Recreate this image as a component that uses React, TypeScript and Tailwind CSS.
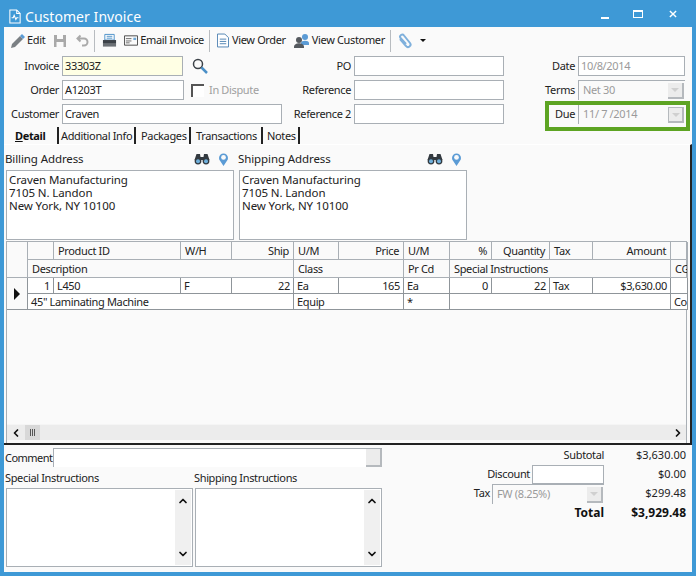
import type { ReactNode } from "react";
import { ChevronDown, ChevronLeft, ChevronRight, ChevronUp } from "lucide-react";

const gridCols = "grid grid-cols-[21px_26px_127px_51px_62px_45px_65px_46px_42px_58px_43px_78px_17px]";

function Label({ children, w }: { children: ReactNode; w: string }) {
  return <div className={`${w} shrink-0 text-right pr-[3px]`}>{children}</div>;
}

function Field({ value, w, bg, muted }: { value?: string; w: string; bg?: string; muted?: boolean }) {
  return (
    <div className={`${w} h-[20px] shrink-0 border border-[#a9afb5] ${bg ?? "bg-white"} ${muted ? "text-[#9a9a9a]" : ""} px-[2px] leading-[18px] overflow-hidden whitespace-nowrap`}>
      {value}
    </div>
  );
}

function Combo({ value, w, boxed }: { value: string; w: string; boxed?: boolean }) {
  return (
    <div className={`${w} h-[20px] shrink-0 flex border-l border-t border-[#a9afb5] bg-[#fafafa] text-[#9a9a9a] leading-[18px] pl-[4px]`}>
      <span className="flex-1 whitespace-nowrap">{value}</span>
      <span className={`w-[16px] h-[16px] mt-[2px] mr-[1px] flex items-center justify-center bg-[#ececec] border-r-2 border-b-2 border-[#b5b9bd] ${boxed ? "border-t border-l" : ""}`}>
        <span className="w-0 h-0 border-x-[4px] border-x-transparent border-t-[4px] border-t-[#d0d0d0]" />
      </span>
    </div>
  );
}

function Tab({ children, w, active }: { children: ReactNode; w: string; active?: boolean }) {
  return (
    <div className={`${w} h-[17px] leading-[17px] border-r-2 border-[#222] whitespace-nowrap ${active ? "font-bold pl-[11px] text-[#111]" : "pl-[2px]"}`}>
      {children}
    </div>
  );
}

function Divider() {
  return <div className="w-px h-[22px] bg-[#b8bcc0] mx-[5px]" />;
}

function Binoculars() {
  return (
    <svg width="16" height="12" viewBox="0 0 16 12">
      <path d="M2.500 1h3.500l.5 3h3l.5-3h3.500L15.500 7h-15z" fill="#333a40" />
      <circle cx="4" cy="8" r="3.400" fill="#333a40" />
      <circle cx="12" cy="8" r="3.400" fill="#333a40" />
      <circle cx="4" cy="8.200" r="2" fill="#6fb0dc" />
      <circle cx="12" cy="8.200" r="2" fill="#6fb0dc" />
    </svg>
  );
}

function Pin() {
  return (
    <svg width="11" height="15" viewBox="0 0 12 15">
      <path d="M6 14.500 2.400 9.200A4.900 4.900 0 1 1 9.600 9.200z" fill="#5b9bd5" />
      <circle cx="6" cy="5.300" r="2.600" fill="#fafafa" />
    </svg>
  );
}

function AddressColumn({ title }: { title: string }) {
  return (
    <div className="w-[228px] text-[11.5px] tracking-[-0.1px]">
      <div className="h-[19px] flex items-center gap-[8px] pb-[3px] pr-[5px]">
        <span className="flex-1 -ml-[1px]">{title}</span>
        <Binoculars />
        <Pin />
      </div>
      <div className="w-[228px] h-[70px] border border-[#a9afb5] bg-white px-[2px] pt-[2px] leading-[13px]">
        <div>Craven Manufacturing</div>
        <div>7105 N. Landon</div>
        <div>New York, NY 10100</div>
      </div>
    </div>
  );
}

function HeadCell({ children, span, right }: { children?: ReactNode; span?: string; right?: boolean }) {
  return (
    <div className={`${span ?? ""} h-[18px] border-r border-b border-[#a9afb5] px-[4px] leading-[17px] overflow-hidden whitespace-nowrap ${right ? "text-right" : ""}`}>
      {children}
    </div>
  );
}

function DataCell({ children, span, right }: { children?: ReactNode; span?: string; right?: boolean }) {
  return (
    <div className={`${span ?? ""} h-[16px] bg-white border-r border-b border-[#8f959a] px-[3px] leading-[16px] overflow-hidden whitespace-nowrap ${right ? "text-right" : ""}`}>
      {children}
    </div>
  );
}

function NotesBox() {
  return (
    <div className="w-[187px] h-[79px] border border-[#a9afb5] bg-white flex justify-end p-[1px]">
      <div className="w-[16px] bg-[#f0f0f0] flex flex-col justify-between items-center py-[5px]">
        <ChevronUp size={12} strokeWidth={3.5} color="#111" />
        <ChevronDown size={12} strokeWidth={3.5} color="#111" />
      </div>
    </div>
  );
}

function TotalRow({ label, value, bold, children }: { label?: string; value: string; bold?: boolean; children?: ReactNode }) {
  return (
    <div className={`flex items-center h-[19px] ${bold ? "font-bold text-[#111] text-[12px] tracking-[0px]" : ""}`}>
      <div className="w-[122px] flex justify-end items-center">
        {label}
        {children}
      </div>
      <div className="w-[82px] text-right tracking-[0px]">{value}</div>
    </div>
  );
}

export default function App() {
  return (
    <div className="w-[696px] h-[576px] bg-[#3e99d6] flex flex-col overflow-hidden text-[#222] text-[11px] font-['Noto_Sans',sans-serif] tracking-[-0.35px]">
      {/* title bar */}
      <div className="h-[27px] shrink-0 flex items-center pl-[9px] text-white">
        <div className="flex items-center pt-[5px]">
          <svg width="12" height="15" viewBox="0 0 14 17" fill="none" stroke="#fff" strokeWidth="1.2">
            <path d="M1 1h8l4 4v11H1z" />
            <path d="M9 1v4h4M3 10h2l1-3 2 5 1-2h2" />
          </svg>
          <span className="ml-[4px] text-[14px] tracking-[0.05px]">Customer Invoice</span>
        </div>
        <div className="ml-auto flex items-center mr-[19px]">
          <span className="w-[8px] h-[2px] bg-white mt-[8px]" />
          <span className="ml-[24px] w-[10px] h-[8px] border border-t-2 border-white" />
          <svg className="ml-[26px]" width="8" height="8" viewBox="0 0 9 9" stroke="#fff" strokeWidth="1.6">
            <path d="M1 1l7 7M8 1l-7 7" />
          </svg>
        </div>
      </div>

      <div className="mx-[4px] flex-1 mb-[4px] bg-[#fafafa] flex flex-col min-h-0">
        {/* toolbar */}
        <div className="h-[25px] mt-[1px] flex items-center pl-[6px] shrink-0">
          <svg width="16" height="16" viewBox="0 0 16 16">
            <path d="M1 15l1-4 8-8 3 3-8 8z" fill="#7b8084" />
            <path d="M10 3l2-2 3 3-2 2z" fill="#5b9bd5" />
          </svg>
          <span className="ml-[1px]">Edit</span>
          <svg className="ml-[8px]" width="14" height="14" viewBox="0 0 14 14">
            <path d="M1 1h12v12H1z" fill="#a9a9a9" />
            <path d="M4 1h6v4H4zM3.500 8h7v5h-7z" fill="#fafafa" />
          </svg>
          <svg className="ml-[9px]" width="13" height="13" viewBox="0 0 13 13" fill="none" stroke="#aaa" strokeWidth="2">
            <path d="M4.500 1.500 1.500 4.500l3 3M2 4.500h6a3.500 3.500 0 0 1 0 7H6" />
          </svg>
          <Divider />
          <svg className="ml-[2px]" width="15" height="15" viewBox="0 0 16 15">
            <path d="M3 1h10v6H3z" fill="#fff" stroke="#4a8fc7" />
            <path d="M1 7h14v4H1z" fill="#3c4248" />
            <path d="M1 11h14v3H1z" fill="#6b7075" />
            <path d="M5 3h6M5 5h6" stroke="#4a8fc7" />
          </svg>
          <svg className="ml-[7px]" width="14" height="11" viewBox="0 0 15 11" fill="none" stroke="#444">
            <path d="M.5.500h14v10H.5z" />
            <path d="M2 3.500h6M2 6h6M2 8h4" stroke="#666" />
            <path d="M10 2.500h3v2.500h-3z" fill="#6fa8d6" stroke="none" />
          </svg>
          <span className="ml-[2px]">Email Invoice</span>
          <Divider />
          <svg className="ml-[2px]" width="12" height="15" viewBox="0 0 13 15" fill="#fff" stroke="#4a7fb0">
            <path d="M.5.500h8l4 4v10H.5z" />
            <path d="M3 6h7M3 8.500h7M3 11h7" />
          </svg>
          <span className="ml-[3px]">View Order</span>
          <svg className="ml-[8px]" width="15" height="14" viewBox="0 0 15 14">
            <circle cx="11" cy="3" r="3" fill="#5b9bd5" />
            <path d="M7 9c0-3 8-3 8 0v2H7z" fill="#5b9bd5" />
            <circle cx="5" cy="6" r="3" fill="#555a5f" />
            <path d="M0 13c0-5 10-5 10 0v1H0z" fill="#555a5f" />
          </svg>
          <span className="ml-[3px]">View Customer</span>
          <Divider />
          <svg className="ml-[2px]" width="15" height="16" viewBox="0 0 15 16" fill="none" stroke="#7fb0dc" strokeWidth="2">
            <path d="M2 6l6 7a2.500 2.500 0 0 0 4-3L6 2.500A2 2 0 0 0 2.500 5l5.500 6" />
          </svg>
          <span className="ml-[7px] w-0 h-0 border-x-[3px] border-x-transparent border-t-[3px] border-t-[#111]" />
        </div>

        {/* header fields */}
        <div className="flex flex-col gap-[4px] mt-[3px] shrink-0 relative">
          <div className="flex items-center">
            <Label w="w-[58px]">Invoice</Label>
            <Field value="33303Z" w="w-[121px]" bg="bg-[#ffffe4]" />
            <svg className="ml-[9px]" width="16" height="16" viewBox="0 0 16 16" fill="none">
              <circle cx="6" cy="6" r="4.500" stroke="#3c4248" strokeWidth="1.5" />
              <path d="M9.500 9.500 15 15" stroke="#4a8fc7" strokeWidth="2.500" />
            </svg>
            <Label w="w-[146px]">PO</Label>
            <Field w="w-[150px]" />
            <Label w="w-[74px]">Date</Label>
            <Field value="10/8/2014" w="w-[107px]" muted />
          </div>
          <div className="flex items-center">
            <Label w="w-[58px]">Order</Label>
            <Field value="A1203T" w="w-[122px]" />
            <span className="ml-[7px] w-[13px] h-[13px] border-l-2 border-t-2 border-[#555] bg-white" />
            <span className="ml-[5px] text-[#a0a0a0] w-[75px]">In Dispute</span>
            <Label w="w-[70px]">Reference</Label>
            <Field w="w-[150px]" />
            <Label w="w-[74px]">Terms</Label>
            <Combo value="Net 30" w="w-[107px]" />
          </div>
          <div className="flex items-center">
            <Label w="w-[58px]">Customer</Label>
            <Field value="Craven" w="w-[220px]" />
            <Label w="w-[72px]">Reference 2</Label>
            <Field w="w-[150px]" />
            <Label w="w-[74px]">Due</Label>
            <Combo value="11/ 7 /2014" w="w-[107px]" boxed />
          </div>
          {/* highlight drawn over the screenshot */}
          <div className="absolute left-[541px] top-[45px] w-[145px] h-[30px] border-[4px] border-[#5da423]" />
        </div>

        {/* tabs */}
        <div className="flex mt-[3px] h-[17px] shrink-0">
          <Tab w="w-[55px]" active>
            <span className="underline decoration-1">D</span>etail
          </Tab>
          <Tab w="w-[77px]">Additional Info</Tab>
          <Tab w="w-[55px]">
            <span className="pl-[3px]">Packages</span>
          </Tab>
          <Tab w="w-[72px]">
            <span className="pl-[3px]">Transactions</span>
          </Tab>
          <Tab w="w-[37px]">
            <span className="pl-[2px]">Notes</span>
          </Tab>
        </div>

        {/* detail panel */}
        <div className="flex-1 min-h-0 flex flex-col border-t border-white border-r-2 border-r-[#222]">
          <div className="flex gap-[5px] pl-[2px] mt-[6px] shrink-0">
            <AddressColumn title="Billing Address" />
            <AddressColumn title="Shipping Address" />
          </div>

          {/* line items */}
          <div className="mt-[1px] ml-[2px] w-[681px] flex-1 min-h-0 border-l border-r border-t border-[#a9afb5] flex flex-col">
            <div className={gridCols}>
              <div className="row-span-2 border-r border-b border-[#a9afb5]" />
              <HeadCell />
              <HeadCell>Product ID</HeadCell>
              <HeadCell>W/H</HeadCell>
              <HeadCell right>Ship</HeadCell>
              <HeadCell>U/M</HeadCell>
              <HeadCell right>Price</HeadCell>
              <HeadCell>U/M</HeadCell>
              <HeadCell right>%</HeadCell>
              <HeadCell right>Quantity</HeadCell>
              <HeadCell>Tax</HeadCell>
              <HeadCell right>Amount</HeadCell>
              <HeadCell />
              <HeadCell span="col-span-4">Description</HeadCell>
              <HeadCell span="col-span-2">Class</HeadCell>
              <HeadCell>Pr Cd</HeadCell>
              <HeadCell span="col-span-4">Special Instructions</HeadCell>
              <HeadCell>CG</HeadCell>

              <div className="row-span-2 border-r border-b border-[#8f959a] flex items-center justify-center">
                <span className="w-0 h-0 border-y-[6px] border-y-transparent border-l-[6px] border-l-[#111]" />
              </div>
              <DataCell right>1</DataCell>
              <DataCell>L450</DataCell>
              <DataCell>F</DataCell>
              <DataCell right>22</DataCell>
              <DataCell>Ea</DataCell>
              <DataCell right>165</DataCell>
              <DataCell>Ea</DataCell>
              <DataCell right>0</DataCell>
              <DataCell right>22</DataCell>
              <DataCell>Tax</DataCell>
              <DataCell right>$3,630.00</DataCell>
              <DataCell />
              <DataCell span="col-span-4">45" Laminating Machine</DataCell>
              <DataCell span="col-span-2">Equip</DataCell>
              <DataCell>*</DataCell>
              <DataCell span="col-span-4" />
              <DataCell>Co</DataCell>
            </div>
            <div className="flex-1" />
            <div className="h-[16px] bg-[#ececec] flex items-center shrink-0 border-t border-[#f5f5f5]">
              <ChevronLeft className="ml-[3px]" size={12} strokeWidth={3.5} color="#111" />
              <div className="ml-[3px] w-[15px] h-[15px] bg-[#d8d8d8] flex items-center justify-center gap-[1px]">
                <span className="w-px h-[7px] bg-[#555]" />
                <span className="w-px h-[7px] bg-[#555]" />
                <span className="w-px h-[7px] bg-[#555]" />
              </div>
              <ChevronRight className="ml-auto mr-[2px]" size={12} strokeWidth={3.5} color="#111" />
            </div>
            <div className="h-[3px] shrink-0" />
          </div>
        </div>

        {/* footer */}
        <div className="h-[129px] shrink-0 border-t-2 border-[#222] flex pl-[2px] pt-[3px]">
          <div className="w-[376px] shrink-0">
            <div className="flex items-center h-[19px]">
              <span className="w-[48px] shrink-0 -ml-[1px] pt-[1px] tracking-[-0.55px]">Comment</span>
              <div className="flex-1 h-[19px] flex bg-white border-l border-t border-[#a9afb5] justify-end">
                <span className="w-[16px] h-[18px] bg-[#ececec] border-r-2 border-b-2 border-[#b5b9bd]" />
              </div>
            </div>
            <div className="flex mt-[2px] h-[19px] items-center">
              <span className="w-[189px] -ml-[1px]">Special Instructions</span>
              <span>Shipping Instructions</span>
            </div>
            <div className="flex gap-[2px]">
              <NotesBox />
              <NotesBox />
            </div>
          </div>
          <div className="ml-auto w-[204px] flex flex-col mr-[6px] -mt-[2px]">
            <TotalRow label="Subtotal" value="$3,630.00" />
            <TotalRow value="$0.00">
              Discount
              <div className="ml-[2px] w-[72px] h-[19px] bg-white border border-[#a9afb5]" />
            </TotalRow>
            <TotalRow value="$299.48">
              Tax
              <div className="ml-[2px] w-[112px]">
                <Combo value="FW (8.25%)" w="w-[112px]" />
              </div>
            </TotalRow>
            <TotalRow label="Total" value="$3,929.48" bold />
          </div>
        </div>
      </div>
    </div>
  );
}
